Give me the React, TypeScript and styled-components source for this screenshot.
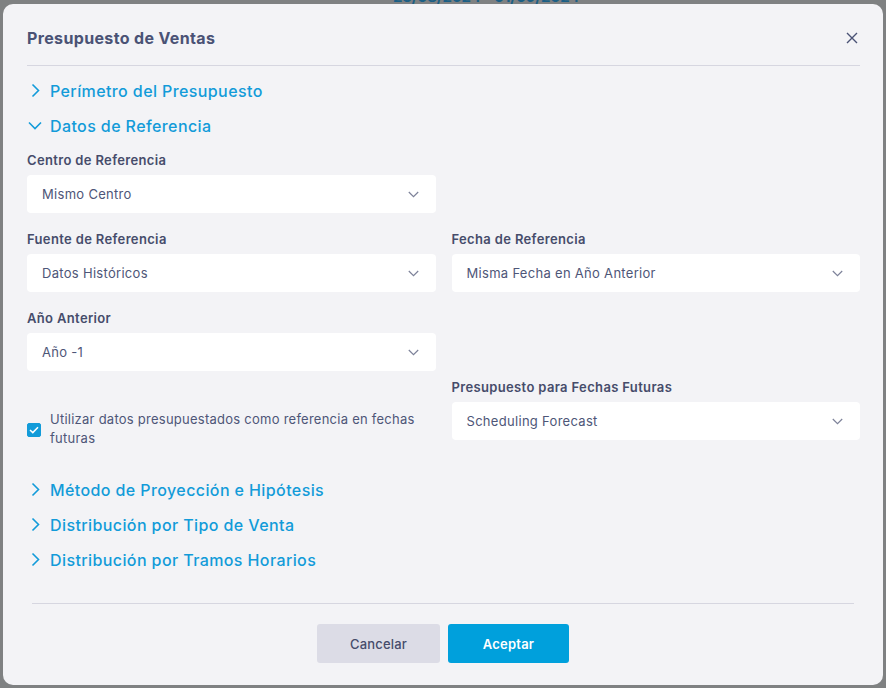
import React, { useState } from "react";
import styled, { createGlobalStyle } from "styled-components";

const GlobalStyle = createGlobalStyle`
  html, body {
    margin: 0;
    padding: 0;
    width: 886px;
    height: 688px;
    overflow: hidden;
    background: #7f8182;
    font-family: "Inter", "Open Sans", sans-serif;
  }
`;

const Backdrop = styled.div`
  position: relative;
  width: 886px;
  height: 688px;
  padding: 4px 3px 0 3px;
  box-sizing: border-box;
`;

const BehindDate = styled.div`
  position: absolute;
  top: -13px;
  left: 393px;
  font-size: 15px;
  font-weight: 700;
  color: #1b5f85;
  letter-spacing: -0.2px;
`;

const Modal = styled.div`
  position: relative;
  width: 880px;
  height: 681px;
  background: #f3f3f6;
  border-radius: 10px;
  padding: 0 23px 0 24px;
  box-sizing: border-box;
  display: flex;
  flex-direction: column;
`;

const Header = styled.div`
  display: flex;
  align-items: center;
  justify-content: space-between;
  padding: 24px 0 17px 0;
  border-bottom: 1px solid #d6d6e0;
`;

const Title = styled.h2`
  margin: 0;
  font-size: 16px;
  line-height: 20px;
  font-weight: 700;
  letter-spacing: 0.35px;
  color: #4a5275;
`;

const CloseButton = styled.button`
  border: none;
  background: transparent;
  padding: 0;
  margin-right: 1px;
  width: 14px;
  height: 14px;
  display: flex;
  align-items: center;
  justify-content: center;
  cursor: pointer;
`;

const Body = styled.div`
  padding-top: 7px;
  flex: 1;
`;

const SectionHead = styled.button`
  display: flex;
  align-items: center;
  gap: 7px;
  height: 35px;
  padding: 0;
  border: none;
  background: transparent;
  color: #129bd9;
  font-family: inherit;
  font-size: 16px;
  font-weight: 500;
  letter-spacing: 0.4px;
  cursor: pointer;
`;

const Chevron = styled.span`
  width: 16px;
  display: flex;
  justify-content: center;
`;

const SectionContent = styled.div`
  padding: 9px 0 24px 0;
  display: grid;
  grid-template-columns: 1fr 1fr;
  column-gap: 16px;
`;

const Field = styled.div<{ $top: number }>`
  display: flex;
  flex-direction: column;
  margin-top: ${(p) => p.$top}px;
`;

const Label = styled.label`
  font-size: 13px;
  line-height: 16px;
  font-weight: 600;
  letter-spacing: 0.35px;
  color: #464c6b;
  margin-bottom: 7px;
`;

const Select = styled.div`
  height: 38px;
  background: #ffffff;
  border-radius: 4px;
  display: flex;
  align-items: center;
  justify-content: space-between;
  padding: 0 17px 0 15px;
  font-size: 13px;
  letter-spacing: 0.3px;
  color: #4e5678;
  cursor: pointer;
`;

const CheckRow = styled.label<{ $top: number }>`
  display: flex;
  align-items: center;
  gap: 9px;
  margin-top: ${(p) => p.$top}px;
  align-self: start;
  font-size: 13px;
  line-height: 19px;
  letter-spacing: 0.25px;
  color: #4e5678;
  padding-right: 12px;
  cursor: pointer;
`;

const Box = styled.span<{ $on: boolean }>`
  flex: none;
  width: 14px;
  height: 14px;
  border-radius: 2px;
  background: ${(p) => (p.$on ? "#129bd9" : "#ffffff")};
  border: 1px solid ${(p) => (p.$on ? "#129bd9" : "#b9bccb")};
  box-sizing: border-box;
  display: flex;
  align-items: center;
  justify-content: center;
  margin-top: 2px;
`;

const Footer = styled.div`
  margin: 0 6px 0 5px;
  border-top: 1px solid #d6d6e0;
  padding: 20px 0 22px 0;
  display: flex;
  justify-content: center;
  gap: 8px;
`;

const Button = styled.button<{ $primary?: boolean }>`
  height: 39px;
  width: ${(p) => (p.$primary ? 121 : 123)}px;
  border: none;
  border-radius: 3px;
  font-family: inherit;
  font-size: 13px;
  letter-spacing: 0.2px;
  font-weight: ${(p) => (p.$primary ? 600 : 500)};
  background: ${(p) => (p.$primary ? "#00a0dc" : "#dcdce6")};
  color: ${(p) => (p.$primary ? "#ffffff" : "#464c6b")};
  cursor: pointer;
`;

const Right = () => (
  <svg width="9" height="15" viewBox="0 0 9 15">
    <path d="M1.5 1.5 L7.5 7.5 L1.5 13.5" fill="none" stroke="#129bd9" strokeWidth="1.6" />
  </svg>
);

const Down = () => (
  <svg width="14" height="9" viewBox="0 0 14 9">
    <path d="M1 1.5 L7 7.5 L13 1.5" fill="none" stroke="#129bd9" strokeWidth="1.6" />
  </svg>
);

const SelectArrow = () => (
  <svg width="11" height="7" viewBox="0 0 11 7">
    <path d="M0.8 1 L5.5 5.7 L10.2 1" fill="none" stroke="#7d8299" strokeWidth="1.2" />
  </svg>
);

const Dropdown = ({ value }: { value: string }) => (
  <Select>
    <span>{value}</span>
    <SelectArrow />
  </Select>
);

export default function App() {
  const [useBudget, setUseBudget] = useState(true);
  const closed = [
    "Método de Proyección e Hipótesis",
    "Distribución por Tipo de Venta",
    "Distribución por Tramos Horarios",
  ];

  return (
    <>
      <GlobalStyle />
      <Backdrop>
        <BehindDate>23/08/2024 - 01/09/2024</BehindDate>
        <Modal>
          <Header>
            <Title>Presupuesto de Ventas</Title>
            <CloseButton aria-label="Cerrar">
              <svg width="12" height="12" viewBox="0 0 12 12">
                <path d="M1 1 L11 11 M11 1 L1 11" stroke="#4a5275" strokeWidth="1.4" />
              </svg>
            </CloseButton>
          </Header>
          <Body>
            <SectionHead>
              <Chevron>
                <Right />
              </Chevron>
              Perímetro del Presupuesto
            </SectionHead>
            <SectionHead>
              <Chevron>
                <Down />
              </Chevron>
              Datos de Referencia
            </SectionHead>
            <SectionContent>
              <Field $top={0}>
                <Label>Centro de Referencia</Label>
                <Dropdown value="Mismo Centro" />
              </Field>
              <div />
              <Field $top={18}>
                <Label>Fuente de Referencia</Label>
                <Dropdown value="Datos Históricos" />
              </Field>
              <Field $top={18}>
                <Label>Fecha de Referencia</Label>
                <Dropdown value="Misma Fecha en Año Anterior" />
              </Field>
              <Field $top={18}>
                <Label>Año Anterior</Label>
                <Dropdown value="Año -1" />
              </Field>
              <div />
              <CheckRow $top={39} onClick={() => setUseBudget(!useBudget)}>
                <Box $on={useBudget}>
                  {useBudget && (
                    <svg width="10" height="8" viewBox="0 0 10 8">
                      <path d="M1 4 L3.8 6.6 L9 1.2" fill="none" stroke="#ffffff" strokeWidth="1.5" />
                    </svg>
                  )}
                </Box>
                <span>Utilizar datos presupuestados como referencia en fechas futuras</span>
              </CheckRow>
              <Field $top={8}>
                <Label>Presupuesto para Fechas Futuras</Label>
                <Dropdown value="Scheduling Forecast" />
              </Field>
            </SectionContent>
            {closed.map((t) => (
              <SectionHead key={t}>
                <Chevron>
                  <Right />
                </Chevron>
                {t}
              </SectionHead>
            ))}
          </Body>
          <Footer>
            <Button>Cancelar</Button>
            <Button $primary>Aceptar</Button>
          </Footer>
        </Modal>
      </Backdrop>
    </>
  );
}
